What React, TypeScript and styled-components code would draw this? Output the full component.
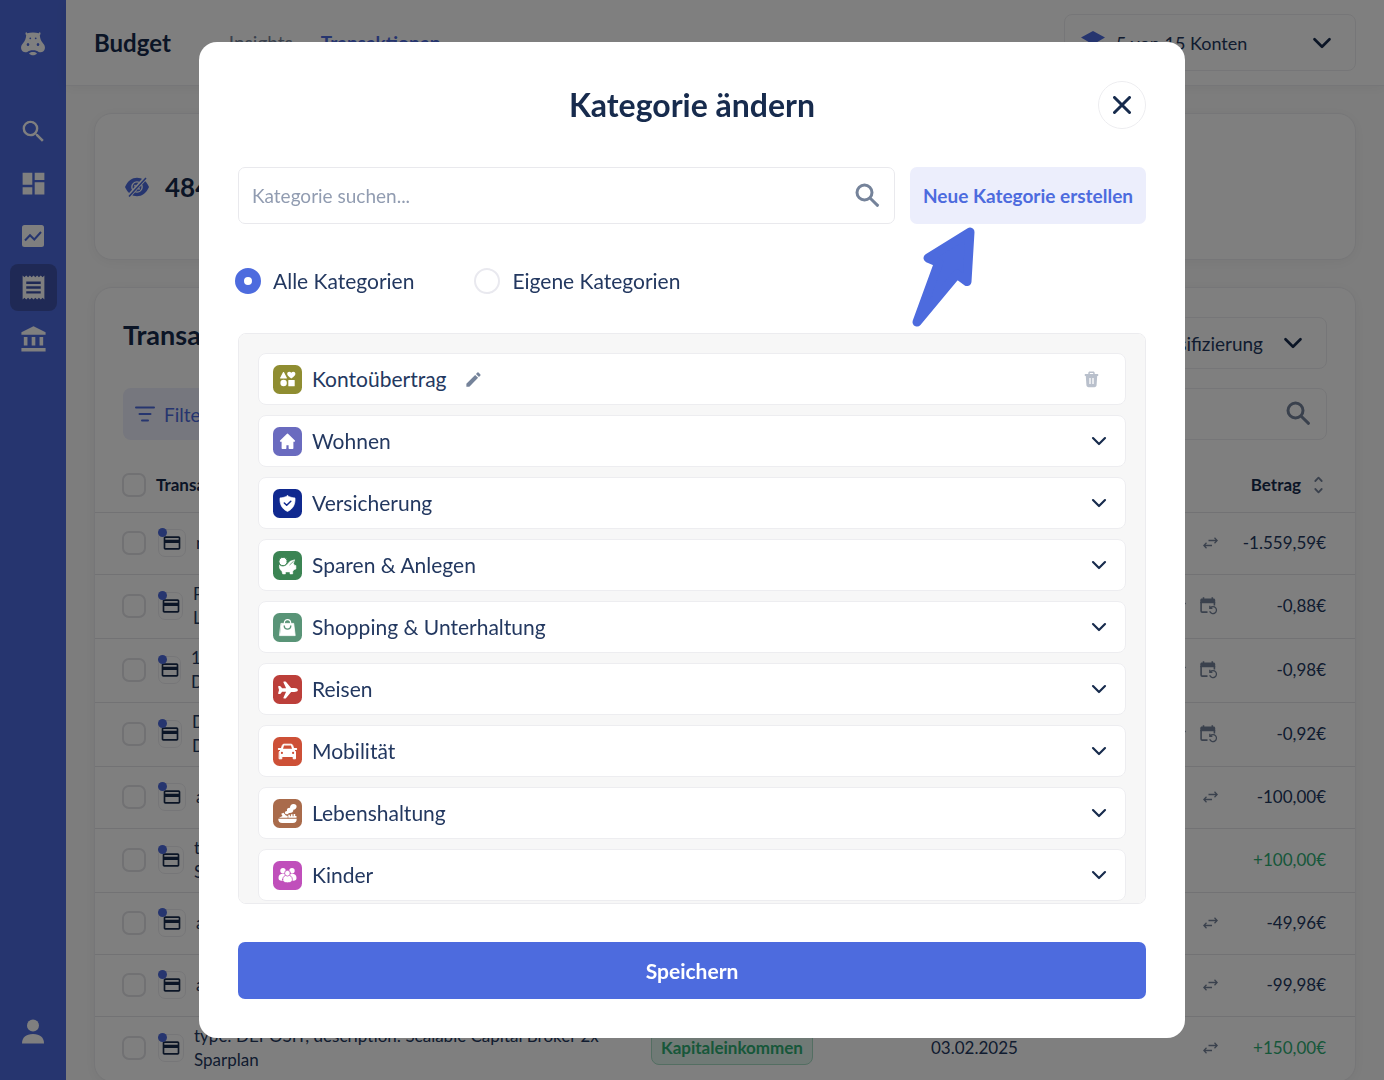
import React from "react";
import styled, { createGlobalStyle } from "styled-components";
import {
  MdSearch,
  MdDashboard,
  MdReceipt,
  MdAccountBalance,
  MdOutlineCreditCard,
  MdEdit,
} from "react-icons/md";
import { IoAirplane } from "react-icons/io5";

const color = {
  brand: "#4d6bde",
  ink: "#172b4d",
  text: "#233860",
  muted: "#75839a",
  line: "#ededf0",
  soft: "#eceefc",
  green: "#2fae74",
};

const GlobalStyle = createGlobalStyle`
  *, *::before, *::after { box-sizing: border-box; }
  body { margin: 0; background: #fbfbfb; }
  body, button, input, select { font-family: Lato, "Open Sans", sans-serif; color: ${color.text}; }
  button { padding: 0; border: 0; background: none; cursor: pointer; }
  h1, h2, p { margin: 0; }
  svg { display: block; flex: none; }
`;

/* ---------- page frame ---------- */

const Shell = styled.div`
  display: flex;
  height: 100vh;
  overflow: hidden;
`;

const Sidebar = styled.nav`
  flex: none;
  width: 66px;
  padding: 32px 9px 25px;
  background: ${color.brand};
  color: #fff;
  display: flex;
  flex-direction: column;
  align-items: center;
`;

const NavList = styled.div`
  display: flex;
  flex-direction: column;
  gap: 5px;
  margin: 52px 0 auto;
`;

const NavLink = styled.a<{ $active?: boolean }>`
  width: 47px;
  height: 47px;
  border-radius: 8px;
  display: grid;
  place-items: center;
  color: #fff;
  background: ${(p) => (p.$active ? "#3f53ab" : "transparent")};
`;

const Main = styled.main`
  flex: 1;
  min-width: 0;
`;

const TopBar = styled.header`
  height: 86px;
  padding: 0 28px;
  display: flex;
  align-items: center;
  background: #fff;
  border-bottom: 1px solid ${color.line};
  box-shadow: 0 2px 12px rgba(0, 0, 0, 0.05);
`;

const PageTitle = styled.h1`
  font-size: 24px;
  font-weight: 700;
  color: ${color.ink};
`;

const Tabs = styled.div`
  display: flex;
  gap: 28px;
  margin-left: 58px;
  margin-right: auto;
`;

const Tab = styled.a<{ $active?: boolean }>`
  font-size: 19px;
  text-decoration: none;
  font-weight: ${(p) => (p.$active ? 700 : 400)};
  color: ${(p) => (p.$active ? color.brand : color.muted)};
`;

const SelectBox = styled.label<{ $tall?: boolean; $width: number }>`
  width: ${(p) => p.$width}px;
  height: ${(p) => (p.$tall ? 57 : 52)}px;
  padding: 0 23px 0 16px;
  display: flex;
  align-items: center;
  gap: 11px;
  border: 1px solid ${color.line};
  border-radius: 8px;
  background: #fff;
`;

const Select = styled.select<{ $end?: boolean }>`
  flex: 1;
  min-width: 0;
  appearance: none;
  border: 0;
  padding: 0 ${(p) => (p.$end ? 9 : 0)}px 0 0;
  background: transparent;
  font-size: ${(p) => (p.$end ? 19 : 18)}px;
  text-align-last: ${(p) => (p.$end ? "right" : "left")};
`;

const Content = styled.div`
  padding: 27px 28px;
  display: flex;
  flex-direction: column;
  gap: 27px;
`;

const Card = styled.section`
  background: #fff;
  border: 1px solid ${color.line};
  border-radius: 18px;
  box-shadow: 0 2px 14px rgba(0, 0, 0, 0.05);
`;

const BalanceCard = styled(Card)`
  height: 147px;
  padding: 0 30px;
  display: flex;
  align-items: center;
  gap: 16px;
  font-size: 26px;
  font-weight: 700;
  color: ${color.ink};
`;

const CardRow = styled.div`
  display: flex;
  align-items: center;
  justify-content: space-between;
  padding: 0 28px;
  margin-bottom: 19px;
`;

const TransactionCard = styled(Card)`
  padding-top: 29px;
`;

const CardTitle = styled.h2`
  font-size: 27px;
  font-weight: 700;
  line-height: 36px;
  padding-bottom: 16px;
  color: ${color.ink};
`;

const FilterButton = styled.button`
  height: 52px;
  padding: 0 12px;
  display: flex;
  align-items: center;
  gap: 9px;
  border-radius: 8px;
  background: ${color.soft};
  color: ${color.brand};
  font-size: 19px;
`;

const TableSearch = styled.label`
  width: 500px;
  height: 52px;
  padding: 0 15px;
  display: flex;
  align-items: center;
  border: 1px solid ${color.line};
  border-radius: 8px;
  color: ${color.muted};
`;

const PlainInput = styled.input`
  flex: 1;
  min-width: 0;
  border: 0;
  padding: 0;
  outline: 0;
  background: transparent;
  font-size: 19px;
  &::placeholder { color: #919cb1; opacity: 1; }
`;

/* ---------- table ---------- */

const Table = styled.table`
  width: 100%;
  table-layout: fixed;
  border-collapse: collapse;
  font-size: 17px;
  line-height: 24px;
  th { height: 53px; padding: 0; text-align: left; font-weight: 700; color: ${color.ink}; }
  td { padding: 0; }
  tr { border-bottom: 1px solid #e4e4e8; }
  th:first-child, td:first-child { padding-left: 27px; }
  th:last-child, td:last-child { padding-right: 29px; text-align: right; }
`;

const Col = styled.col<{ $w?: number }>`
  width: ${(p) => (p.$w ? `${p.$w}px` : "auto")};
`;

const Row = styled.tr<{ $tall?: boolean }>`
  height: ${(p) => (p.$tall ? 64 : 62)}px;
`;

const Tick = styled.input`
  appearance: none;
  display: block;
  width: 24px;
  height: 24px;
  margin: 0;
  border: 2px solid #e2e2e6;
  border-radius: 7px;
`;

const NameCell = styled.div`
  display: flex;
  align-items: center;
  gap: 10px;
  padding-left: 2px;
  white-space: nowrap;
`;

const Account = styled.span<{ $w: number }>`
  position: relative;
  flex: none;
  width: ${(p) => p.$w}px;
  height: 28px;
  border: 1px solid ${color.line};
  border-radius: 7px;
  display: grid;
  place-items: center;
  color: ${color.ink};
  &::after {
    content: "";
    position: absolute;
    left: -1px;
    top: -2px;
    width: 9px;
    height: 9px;
    border-radius: 50%;
    background: ${color.brand};
  }
`;

const Marks = styled.div`
  display: flex;
  justify-content: flex-end;
  align-items: center;
  gap: 14px;
  padding-right: 1px;
  color: ${color.muted};
`;

const Amount = styled.td<{ $plus?: boolean }>`
  color: ${(p) => (p.$plus ? color.green : color.text)};
`;

const SortHead = styled.span`
  display: inline-flex;
  align-items: center;
  gap: 13px;
  padding-right: 3px;
  svg { color: ${color.muted}; }
`;

const Tag = styled.span`
  display: inline-block;
  padding: 4px 9px;
  border: 1px solid #a6dcc4;
  border-radius: 8px;
  background: #e0f5ec;
  color: ${color.green};
  font-weight: 700;
`;

/* ---------- dialog ---------- */

const Backdrop = styled.div`
  position: fixed;
  inset: 0;
  padding: 24px;
  display: flex;
  align-items: center;
  justify-content: center;
  background: rgba(0, 0, 0, 0.5);
`;

const Dialog = styled.div`
  width: 100%;
  max-width: 986px;
  padding: 39px;
  border-radius: 18px;
  background: #fff;
`;

const DialogHead = styled.div`
  display: grid;
  grid-template-columns: 48px 1fr 48px;
  align-items: center;
  margin-bottom: 38px;
`;

const DialogTitle = styled.h2`
  grid-column: 2;
  text-align: center;
  font-size: 32px;
  line-height: 48px;
  font-weight: 700;
  color: ${color.ink};
`;

const CloseButton = styled.button`
  width: 48px;
  height: 48px;
  border: 1px solid ${color.line};
  border-radius: 50%;
  display: grid;
  place-items: center;
  color: ${color.ink};
`;

const SearchRow = styled.div`
  display: flex;
  gap: 15px;
  margin-bottom: 44px;
`;

const SearchBox = styled.label`
  flex: 1;
  height: 57px;
  padding: 0 14px 0 13px;
  display: flex;
  align-items: center;
  border: 1px solid #e9e9ed;
  border-radius: 7px;
  color: ${color.muted};
`;

const CreateWrap = styled.div`
  position: relative;
`;

const CreateButton = styled.button`
  width: 236px;
  height: 57px;
  border-radius: 7px;
  background: ${color.soft};
  color: ${color.brand};
  font-size: 19px;
  font-weight: 700;
`;

const Pointer = styled.svg`
  position: absolute;
  left: 0;
  top: 59px;
`;

const Choices = styled.div`
  display: flex;
  gap: 60px;
  margin: 0 0 39px -3px;
`;

const Choice = styled.label`
  display: flex;
  align-items: center;
  gap: 12px;
  font-size: 21px;
  line-height: 26px;
`;

const Radio = styled.input`
  appearance: none;
  width: 26px;
  height: 26px;
  margin: 0;
  border: 2px solid #e9e9ef;
  border-radius: 50%;
  background: #fff;
  &:checked { border: 9px solid ${color.brand}; }
`;

const List = styled.ul`
  height: 571px;
  margin: 0 0 38px;
  padding: 19px;
  list-style: none;
  display: flex;
  flex-direction: column;
  gap: 10px;
  overflow: hidden auto;
  scrollbar-width: none;
  border: 1px solid #ececef;
  border-radius: 8px;
  background: #f7f7f7;
`;

const Item = styled.li`
  flex: none;
  height: 52px;
  display: flex;
  border: 1px solid #ededf0;
  border-radius: 8px;
  background: #fff;
`;

const ItemLine = styled.div`
  flex: 1;
  padding: 0 26px 0 14px;
  display: flex;
  align-items: center;
  gap: 10px;
  font-size: 21px;
  line-height: 26px;
`;

const ItemToggle = styled(ItemLine).attrs({ as: "button" })`
  padding-right: 18px;
`;

const Push = styled.span`
  margin-left: auto;
`;

const EditButton = styled.button`
  margin-left: 7px;
  color: ${color.muted};
`;

const DeleteButton = styled.button`
  margin-left: auto;
  color: #b9c0cc;
`;

const SaveButton = styled.button`
  display: block;
  width: 100%;
  height: 57px;
  border-radius: 7px;
  background: ${color.brand};
  color: #fff;
  font-size: 21px;
  font-weight: 700;
`;

/* ---------- icons ---------- */

const Chevron = ({ w = 20, stroke = 2.7 }: { w?: number; stroke?: number }) => (
  <svg width={w} height={w} viewBox="0 0 20 20" fill="none" stroke={color.ink} strokeWidth={stroke} strokeLinecap="round" strokeLinejoin="round">
    <path d="M2.500 6.300 10 13.800l7.500-7.500" />
  </svg>
);

const Magnifier = () => (
  <svg width="26" height="26" viewBox="0 0 26 26" fill="none" stroke="currentColor" strokeWidth="3" strokeLinecap="round">
    <circle cx="10.500" cy="9.500" r="7.500" />
    <path d="m16.500 15.500 7 6.800" />
  </svg>
);

const Hippo = () => (
  <svg width="24" height="24" viewBox="0 0 24 24" fill="#fff">
    <path d="M4.800 .6c.5-.6 1.200-.2 1.300.6 3.700-1 8.100-1 11.800 0 .1-.8.800-1.200 1.300-.6.6.8.3 1.900-.4 2.700.3 3 1 5.600 3 7.600 2 2 2.500 4.300 1.900 6.300-.8 2.700-3.300 3.500-6 2.700-1.200-1-3.200-1.700-5.700-1.700s-4.500.7-5.700 1.700c-2.700.8-5.200 0-6-2.700-.6-2-.1-4.300 1.900-6.300 2-2 2.700-4.600 3-7.600-.7-.8-1-1.900-.4-2.700Z" />
    <path d="M8 21.400c1.200-1 2.500-1.400 4-1.400s2.800.4 4 1.400c-1 1.200-2.400 1.800-4 1.800s-3-.6-4-1.800Z" />
    <g fill={color.brand}>
      <circle cx="9.300" cy="6.300" r=".9" />
      <circle cx="14.700" cy="6.300" r=".9" />
      <ellipse cx="7" cy="12.400" rx="1.300" ry="1.500" />
      <ellipse cx="17" cy="12.400" rx="1.300" ry="1.500" />
    </g>
  </svg>
);

const ChartTile = () => (
  <svg width="22" height="22" viewBox="0 0 22 22">
    <rect width="22" height="22" rx="2.500" fill="#fff" />
    <path d="m3 15.500 5-5.300 4.300 4.300L19 7" fill="none" stroke={color.brand} strokeWidth="2" />
  </svg>
);

const PersonIcon = () => (
  <svg width="22" height="25" viewBox="0 0 22 25" fill="#fff">
    <circle cx="11" cy="6.500" r="6" />
    <path d="M0 24.500c0-6 4-9.500 11-9.500s11 3.500 11 9.500Z" />
  </svg>
);

const HiddenEye = () => (
  <svg width="24" height="20" viewBox="0 0 24 20">
    <path d="M0 10C3 3.600 7 .8 12 .8S21 3.600 24 10c-3 6.400-7 9.200-12 9.200S3 16.400 0 10Z" fill={color.brand} />
    <circle cx="12" cy="10" r="5.800" fill="#fff" />
    <circle cx="12" cy="10" r="4.500" fill={color.brand} />
    <path d="M10 8.500v.6M14 11.500v.6M9.800 12h.6" stroke="#fff" strokeWidth="1.600" strokeLinecap="round" />
    <path d="M3.500 19.500 20.500 1" stroke="#fff" strokeWidth="4" />
    <path d="M4 19.500 21 1" stroke={color.brand} strokeWidth="1.600" />
  </svg>
);

const Layers = () => (
  <svg width="24" height="24" viewBox="0 0 24 24">
    <path d="M12 0 24 6.500l-12 7-12-7Z" fill={color.brand} />
    <path d="m1.500 11.500 10.500 6 10.500-6M1.500 16.500l10.500 6 10.500-6" fill="none" stroke={color.brand} strokeWidth="2" />
  </svg>
);

const FilterLines = () => (
  <svg width="20" height="16" viewBox="0 0 20 16" stroke="currentColor" strokeWidth="2" strokeLinecap="round">
    <path d="M1 1.500h18M4.500 8h11M7 14.500h6" />
  </svg>
);

const Transfer = () => (
  <svg width="15" height="12" viewBox="0 0 15 12" fill="none" stroke="currentColor" strokeWidth="1.300">
    <path d="M5.500 3.500h8.500M11.500 .8l2.700 2.700-2.700 2.700M9 8.500H1M3.500 5.800.8 8.500l2.700 2.700" />
  </svg>
);

const CalendarRepeat = () => (
  <svg width="18" height="18" viewBox="0 0 18 18" fill="none" stroke="currentColor">
    <path d="M3.500 .3v3M12.300 .3v3" strokeWidth="1.600" />
    <path d="M.3 3.200c0-1 .6-1.600 1.600-1.600h11.700c1 0 1.600.6 1.600 1.600v3H.3Z" fill="currentColor" stroke="none" />
    <path d="M1.100 5v9c0 .7.400 1.100 1.100 1.100h5.300M14.400 5v3.500" strokeWidth="1.600" />
    <path d="M10.300 10.800a3.500 3.500 0 1 1-.6 3.500M9.800 8.700v2.600h2.600" strokeWidth="1.300" />
  </svg>
);

const SortArrows = () => (
  <svg width="9" height="18" viewBox="0 0 9 18" fill="none" stroke="currentColor" strokeWidth="1.800" strokeLinecap="round" strokeLinejoin="round">
    <path d="m1.300 5 3.200-3.300L7.700 5M1.300 13l3.200 3.300L7.700 13" />
  </svg>
);

const Trash = () => (
  <svg width="15" height="17" viewBox="0 0 15 17">
    <path d="M4.300 3V2c0-.9.6-1.500 1.500-1.500h3.400c.9 0 1.500.6 1.500 1.500v1h3.500v2h-1l-.6 9c-.1 1.400-.9 2.200-2.200 2.200H4.600c-1.300 0-2.100-.8-2.200-2.200l-.6-9h-1V3Zm1.500 0h3.400V2H5.800Z" fill="currentColor" />
    <path d="M6 7v6M9 7v6" stroke="#fff" strokeWidth="1.300" />
  </svg>
);

const glyphs: Record<string, (tint: string) => React.ReactNode> = {
  shapes: () => (
    <>
      <path d="M10.500 7.600 13.300 13H7.700Z" strokeWidth="1.200" />
      <path d="M18.300 13.600c-2.600-1.900-4.100-3.100-4.100-4.800 0-2.300 2.800-2.900 4.100-1 1.300-1.900 4.100-1.300 4.100 1 0 1.700-1.500 2.900-4.100 4.800Z" strokeWidth="0" />
      <circle cx="10.600" cy="18" r="3.200" strokeWidth="0" />
      <rect x="15.300" y="15" width="6.400" height="6.200" rx=".5" strokeWidth="0" />
    </>
  ),
  home: () => (
    <path d="M14.500 7.200 7.600 14h1.700v7.300h3.400v-3.800h3.600v3.800h3.400V14h1.700Z" strokeWidth="1.400" />
  ),
  shield: (tint) => (
    <>
      <path d="M14.500 6.700c2.200 1.400 4.900 2.100 7.500 2.200.6 6-2 11.200-7.500 13.600C9 20.100 6.400 14.900 7 8.900c2.600-.1 5.300-.8 7.500-2.200Z" strokeWidth=".6" />
      <path d="m11.300 14 2.400 2.300 4.100-4" fill="none" stroke={tint} strokeWidth="1.500" />
    </>
  ),
  piggy: (tint) => (
    <>
      <path d="M6.500 14.400c2 1.600 5.600 1.400 7.600-.8l3-3.300 4.500-1.500-1.200 3.700 1.300 2h1.200v3.400l-2 .9-1.200 1.700v2.400H17v-2h-4.600v2H9.700l-.8-2.700c-2-1.600-2.900-3.700-2.400-5.800Z" strokeWidth=".6" />
      <circle cx="10.100" cy="10.500" r="4.200" stroke={tint} strokeWidth="1" />
      <path d="m16.800 13.800 3.600-3.400" fill="none" stroke={tint} strokeWidth=".7" />
    </>
  ),
  bag: (tint) => (
    <>
      <path d="M8.300 10.400h12.400l1.500 12.200H6.800Z" strokeWidth=".8" />
      <path d="M11.300 10.300c0-5 6.400-5 6.400 0" fill="none" strokeWidth="1.200" />
      <path d="M11.200 13c.3 4.200 6.300 4.200 6.600 0" fill="none" stroke={tint} strokeWidth="1.300" />
    </>
  ),
  plane: () => <IoAirplane x="4.500" y="4.500" width="20" height="20" strokeWidth="0" />,
  car: (tint) => (
    <>
      <path d="M6.500 14.600 8 13l1.300-4.600c.3-.8.800-1.200 1.700-1.200h7c.9 0 1.400.4 1.700 1.200L21 13l1.500 1.600v7.200h-2.300v-2.300H8.800v2.300H6.500Z" strokeWidth="1" />
      <path d="M5.700 12h3M20.300 12h3" strokeWidth="1.800" />
      <path d="m10 11.800 1-3.200h7l1 3.200Z" fill={tint} strokeWidth="0" />
      <circle cx="8.900" cy="15.900" r="1.100" fill={tint} strokeWidth="0" />
      <circle cx="20.100" cy="15.900" r="1.100" fill={tint} strokeWidth="0" />
    </>
  ),
  food: () => (
    <g stroke="none">
      <path d="M5.300 19.700h18.400c0 2.900-1.300 4.300-3.800 4.300H9.100c-2.500 0-3.800-1.400-3.800-4.300Z" />
      <path d="M6 18.800 9.500 17 8.200 14.800l2.300-1 2.400 2.600 1.800.6v1.800Z" />
      <path d="M15.300 18.800v-3.100h1.600v1.600h1v-2h1.700v2h1v-2.200h1.600v2h1.300v1.700Z" />
      <path d="M12 14.600c-.4-1.500.3-2.200 2-2.500-.4-2.200.6-3.300 3-3.300 0-2.300 1.400-3.800 3.600-3.800 1.900 0 3 1 3 2.400 0 1.800-1.400 3-3.200 3.300-.1 2.400-1.700 3.500-4.400 3.200-1 1.500-2.600 1.800-4 .7Z" />
    </g>
  ),
  people: (tint) => (
    <>
      <g stroke="none">
        <circle cx="10" cy="9.800" r="2.700" />
        <circle cx="19" cy="9.800" r="2.700" />
        <path d="M5.500 17c0-3 1.700-4.300 4.500-4.300s4 1.300 4 4.300v2.700H8.500c-2 0-3-1-3-2.700ZM23.500 17c0-3-1.700-4.300-4.500-4.300s-4 1.300-4 4.300v2.700h5.500c2 0 3-1 3-2.700Z" />
      </g>
      <path d="M9.600 18.600c0-2.800 2-4.500 4.900-4.500s4.900 1.700 4.900 4.500c0 2-1.300 3.200-4.900 3.200s-4.900-1.200-4.900-3.200Z" stroke={tint} strokeWidth=".8" />
      <circle cx="14.500" cy="12.200" r="2.900" stroke={tint} strokeWidth=".8" />
    </>
  ),
};

const Glyph = ({ name, tint }: { name: string; tint: string }) => (
  <svg width="29" height="29" viewBox="0 0 29 29" fill="#fff" stroke="#fff" strokeLinejoin="round" strokeLinecap="round" color="#fff">
    <rect width="29" height="29" rx="6.500" fill={tint} stroke="none" />
    {glyphs[name](tint)}
  </svg>
);

/* ---------- data ---------- */

const categories = [
  { name: "Wohnen", glyph: "home", tint: "#6a6bbf" },
  { name: "Versicherung", glyph: "shield", tint: "#10298f" },
  { name: "Sparen & Anlegen", glyph: "piggy", tint: "#3b8453" },
  { name: "Shopping & Unterhaltung", glyph: "bag", tint: "#599477" },
  { name: "Reisen", glyph: "plane", tint: "#bc3f3a" },
  { name: "Mobilität", glyph: "car", tint: "#cd5037" },
  { name: "Lebenshaltung", glyph: "food", tint: "#a96b4b" },
  { name: "Kinder", glyph: "people", tint: "#c04fbb" },
];

type Entry = {
  lines: string[];
  box: number;
  marks: "none" | "transfer" | "repeat";
  amount: string;
  tag?: string;
  date?: string;
};

const entries: Entry[] = [
  { lines: ["n26"], box: 28, marks: "transfer", amount: "-1.559,59€" },
  { lines: ["PayPal", "Lastschrift"], box: 25, marks: "repeat", amount: "-0,88€" },
  { lines: ["100", "Dauerauftrag"], box: 23, marks: "repeat", amount: "-0,98€" },
  { lines: ["Depot", "Dauerauftrag"], box: 24, marks: "repeat", amount: "-0,92€" },
  { lines: ["an"], box: 28, marks: "transfer", amount: "-100,00€" },
  { lines: ["type", "Sparplan"], box: 26, marks: "none", amount: "+100,00€" },
  { lines: ["an"], box: 28, marks: "transfer", amount: "-49,96€" },
  { lines: ["an"], box: 28, marks: "transfer", amount: "-99,98€" },
  {
    lines: ["type: DEPOSIT, description: Scalable Capital Broker 2x", "Sparplan"],
    box: 26,
    marks: "transfer",
    amount: "+150,00€",
    tag: "Kapitaleinkommen",
    date: "03.02.2025",
  },
];

/* ---------- views ---------- */

const Transactions = () => (
  <TransactionCard>
    <CardRow>
      <CardTitle>Transaktionen</CardTitle>
      <SelectBox $width={260}>
        <Select $end aria-label="Klassifizierung">
          <option>Klassifizierung</option>
        </Select>
        <Chevron />
      </SelectBox>
    </CardRow>
    <CardRow>
      <FilterButton>
        <FilterLines />
        Filter anzeigen
      </FilterButton>
      <TableSearch>
        <PlainInput aria-label="Transaktionen suchen" />
        <Magnifier />
      </TableSearch>
    </CardRow>
    <Table>
      <colgroup>
        <Col $w={61} />
        <Col />
        <Col $w={280} />
        <Col $w={188} />
        <Col $w={100} />
        <Col $w={136} />
      </colgroup>
      <thead>
        <tr>
          <th><Tick type="checkbox" aria-label="Alle auswählen" /></th>
          <th>Transaktion</th>
          <th>Kategorie</th>
          <th>Datum</th>
          <th />
          <th>
            <SortHead>Betrag <SortArrows /></SortHead>
          </th>
        </tr>
      </thead>
      <tbody>
        {entries.map((e, i) => (
          <Row key={i} $tall={e.lines.length > 1}>
            <td><Tick type="checkbox" aria-label={e.lines[0]} /></td>
            <td>
              <NameCell>
                <Account $w={e.box}><MdOutlineCreditCard size={20} /></Account>
                <div>{e.lines.map((l) => <div key={l}>{l}</div>)}</div>
              </NameCell>
            </td>
            <td>{e.tag && <Tag>{e.tag}</Tag>}</td>
            <td>{e.date}</td>
            <td>
              <Marks>
                {e.marks !== "none" && <Transfer />}
                {e.marks === "repeat" && <CalendarRepeat />}
              </Marks>
            </td>
            <Amount $plus={e.amount.startsWith("+")}>{e.amount}</Amount>
          </Row>
        ))}
      </tbody>
    </Table>
  </TransactionCard>
);

const CategoryDialog = () => (
  <Backdrop>
    <Dialog role="dialog" aria-modal="true" aria-labelledby="dialog-title">
      <DialogHead>
        <DialogTitle id="dialog-title">Kategorie ändern</DialogTitle>
        <CloseButton aria-label="Schließen">
          <svg width="18" height="18" viewBox="0 0 18 18" stroke="currentColor" strokeWidth="3" strokeLinecap="round">
            <path d="m1.500 1.500 15 15M16.500 1.500l-15 15" />
          </svg>
        </CloseButton>
      </DialogHead>
      <SearchRow>
        <SearchBox>
          <PlainInput placeholder="Kategorie suchen..." aria-label="Kategorie suchen" />
          <Magnifier />
        </SearchBox>
        <CreateWrap>
          <CreateButton>Neue Kategorie erstellen</CreateButton>
          <Pointer width="68" height="102" viewBox="0 0 68 102" aria-hidden="true">
            <path
              d="M60 6 18 32l10.700 4.600L7 96l39.900-47.800L57 55.500Z"
              fill={color.brand}
              stroke={color.brand}
              strokeWidth="9"
              strokeLinejoin="round"
            />
          </Pointer>
        </CreateWrap>
      </SearchRow>
      <Choices>
        <Choice>
          <Radio type="radio" name="scope" defaultChecked />
          Alle Kategorien
        </Choice>
        <Choice>
          <Radio type="radio" name="scope" />
          Eigene Kategorien
        </Choice>
      </Choices>
      <List>
        <Item>
          <ItemLine>
            <Glyph name="shapes" tint="#8f8d31" />
            Kontoübertrag
            <EditButton aria-label="Bearbeiten"><MdEdit size={19} /></EditButton>
            <DeleteButton aria-label="Löschen"><Trash /></DeleteButton>
          </ItemLine>
        </Item>
        {categories.map((c) => (
          <Item key={c.name}>
            <ItemToggle>
              <Glyph name={c.glyph} tint={c.tint} />
              {c.name}
              <Push><Chevron w={16} /></Push>
            </ItemToggle>
          </Item>
        ))}
      </List>
      <SaveButton>Speichern</SaveButton>
    </Dialog>
  </Backdrop>
);

export default function App() {
  return (
    <>
      <GlobalStyle />
      <Shell>
        <Sidebar>
          <Hippo />
          <NavList>
            <NavLink href="#suche" aria-label="Suche"><MdSearch size={29} /></NavLink>
            <NavLink href="#dashboard" aria-label="Dashboard"><MdDashboard size={29} /></NavLink>
            <NavLink href="#analyse" aria-label="Analyse"><ChartTile /></NavLink>
            <NavLink href="#budget" aria-label="Budget" $active><MdReceipt size={29} /></NavLink>
            <NavLink href="#konten" aria-label="Konten"><MdAccountBalance size={29} /></NavLink>
          </NavList>
          <NavLink href="#profil" aria-label="Profil"><PersonIcon /></NavLink>
        </Sidebar>
        <Main>
          <TopBar>
            <PageTitle>Budget</PageTitle>
            <Tabs>
              <Tab href="#insights">Insights</Tab>
              <Tab href="#transaktionen" $active>Transaktionen</Tab>
            </Tabs>
            <SelectBox $tall $width={292}>
              <Layers />
              <Select aria-label="Konten">
                <option>5 von 15 Konten</option>
              </Select>
              <Chevron />
            </SelectBox>
          </TopBar>
          <Content>
            <BalanceCard>
              <HiddenEye />
              484.120,55€
            </BalanceCard>
            <Transactions />
          </Content>
        </Main>
      </Shell>
      <CategoryDialog />
    </>
  );
}
